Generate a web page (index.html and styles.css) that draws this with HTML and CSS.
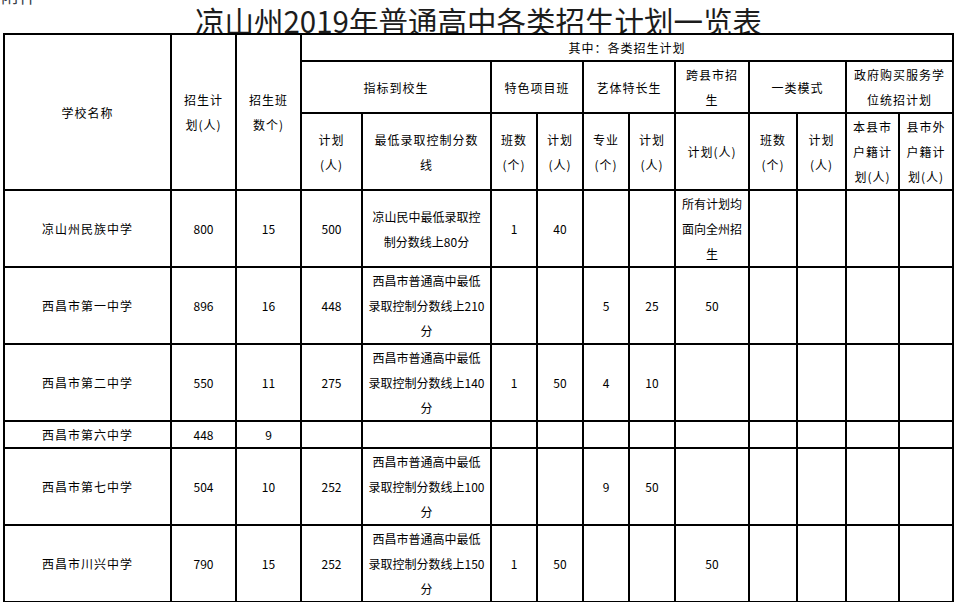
FILE: index.html
```html
<!DOCTYPE html>
<html lang="zh-CN">
<head>
<meta charset="utf-8">
<title>凉山州2019年普通高中各类招生计划一览表</title>
<link rel="stylesheet" href="styles.css">
</head>
<body>
<div class="page">
  <div class="attach">附件</div>
  <h1 class="title">凉山州2019年普通高中各类招生计划一览表</h1>
  <div class="sheet">
    <div class="c h sp name rows3">学校名称</div>
    <div class="c h sp rows3">招生计<br>划(人)</div>
    <div class="c h sp rows3">招生班<br>数个)</div>
    <div class="c h sp cols11">其中：各类招生计划</div>

    <div class="c h sp cols2">指标到校生</div>
    <div class="c h sp cols2">特色项目班</div>
    <div class="c h sp cols2">艺体特长生</div>
    <div class="c h sp">跨县市招<br>生</div>
    <div class="c h sp cols2">一类模式</div>
    <div class="c h sp cols2">政府购买服务学<br>位统招计划</div>

    <div class="c h sp">计划<br>(人)</div>
    <div class="c h sp">最低录取控制分数<br>线</div>
    <div class="c h sp">班数<br>(个)</div>
    <div class="c h sp">计划<br>(人)</div>
    <div class="c h sp">专业<br>(个)</div>
    <div class="c h sp">计划<br>(人)</div>
    <div class="c h sp">计划(人)</div>
    <div class="c h sp">班数<br>(个)</div>
    <div class="c h sp">计划<br>(人)</div>
    <div class="c h sp">本县市<br>户籍计<br>划(人)</div>
    <div class="c h sp">县市外<br>户籍计<br>划(人)</div>

    <div class="c sp">凉山州民族中学</div>
    <div class="c">800</div>
    <div class="c">15</div>
    <div class="c">500</div>
    <div class="c">凉山民中最低录取控<br>制分数线上80分</div>
    <div class="c">1</div>
    <div class="c">40</div>
    <div class="c"></div>
    <div class="c"></div>
    <div class="c">所有计划均<br>面向全州招<br>生</div>
    <div class="c"></div>
    <div class="c"></div>
    <div class="c"></div>
    <div class="c"></div>

    <div class="c sp">西昌市第一中学</div>
    <div class="c">896</div>
    <div class="c">16</div>
    <div class="c">448</div>
    <div class="c">西昌市普通高中最低<br>录取控制分数线上210<br>分</div>
    <div class="c"></div>
    <div class="c"></div>
    <div class="c">5</div>
    <div class="c">25</div>
    <div class="c">50</div>
    <div class="c"></div>
    <div class="c"></div>
    <div class="c"></div>
    <div class="c"></div>

    <div class="c sp">西昌市第二中学</div>
    <div class="c">550</div>
    <div class="c">11</div>
    <div class="c">275</div>
    <div class="c">西昌市普通高中最低<br>录取控制分数线上140<br>分</div>
    <div class="c">1</div>
    <div class="c">50</div>
    <div class="c">4</div>
    <div class="c">10</div>
    <div class="c"></div>
    <div class="c"></div>
    <div class="c"></div>
    <div class="c"></div>
    <div class="c"></div>

    <div class="c sp">西昌市第六中学</div>
    <div class="c">448</div>
    <div class="c">9</div>
    <div class="c"></div>
    <div class="c"></div>
    <div class="c"></div>
    <div class="c"></div>
    <div class="c"></div>
    <div class="c"></div>
    <div class="c"></div>
    <div class="c"></div>
    <div class="c"></div>
    <div class="c"></div>
    <div class="c"></div>

    <div class="c sp">西昌市第七中学</div>
    <div class="c">504</div>
    <div class="c">10</div>
    <div class="c">252</div>
    <div class="c">西昌市普通高中最低<br>录取控制分数线上100<br>分</div>
    <div class="c"></div>
    <div class="c"></div>
    <div class="c">9</div>
    <div class="c">50</div>
    <div class="c"></div>
    <div class="c"></div>
    <div class="c"></div>
    <div class="c"></div>
    <div class="c"></div>

    <div class="c sp">西昌市川兴中学</div>
    <div class="c">790</div>
    <div class="c">15</div>
    <div class="c">252</div>
    <div class="c">西昌市普通高中最低<br>录取控制分数线上150<br>分</div>
    <div class="c">1</div>
    <div class="c">50</div>
    <div class="c"></div>
    <div class="c"></div>
    <div class="c">50</div>
    <div class="c"></div>
    <div class="c"></div>
    <div class="c"></div>
    <div class="c"></div>
  </div>
</div>
</body>
</html>
```

FILE: styles.css
```css
html, body {
  margin: 0;
  padding: 0;
  background: #ffffff;
}

.page {
  display: flow-root;
  font-family: "Noto Sans CJK SC", "Noto Sans", sans-serif;
  color: #000000;
}

.attach {
  margin: -14px 0 0 1px;
  height: 18px;
  font-size: 18px;
  line-height: 18px;
  color: #3a3f4a;
}

.title {
  margin: -2px 0 0 3px;
  width: 951px;
  height: 31px;
  font-size: 29.5px;
  line-height: 36px;
  font-weight: 400;
  text-align: center;
  color: #1c1c1c;
  white-space: nowrap;
}

.sheet {
  position: relative;
  z-index: 1;
  margin-left: 3px;
  width: 949px;
  display: grid;
  grid-template-columns: 167px 65px 65px 61px 129px 46px 46px 46px 46px 74px 48px 49px 53px 54px;
  border-top: 2px solid #000;
  border-left: 2px solid #000;
  background: #ffffff;
}

.c {
  display: flex;
  align-items: center;
  justify-content: center;
  text-align: center;
  border-right: 2px solid #000;
  border-bottom: 2px solid #000;
  background: #ffffff;
  font-size: 12px;
  line-height: 25px;
  white-space: nowrap;
  min-height: 25px;
}

.sp {
  letter-spacing: 1px;
}

.rows3 {
  grid-row: span 3;
}

.cols11 {
  grid-column: span 11;
}

.cols2 {
  grid-column: span 2;
}
```
